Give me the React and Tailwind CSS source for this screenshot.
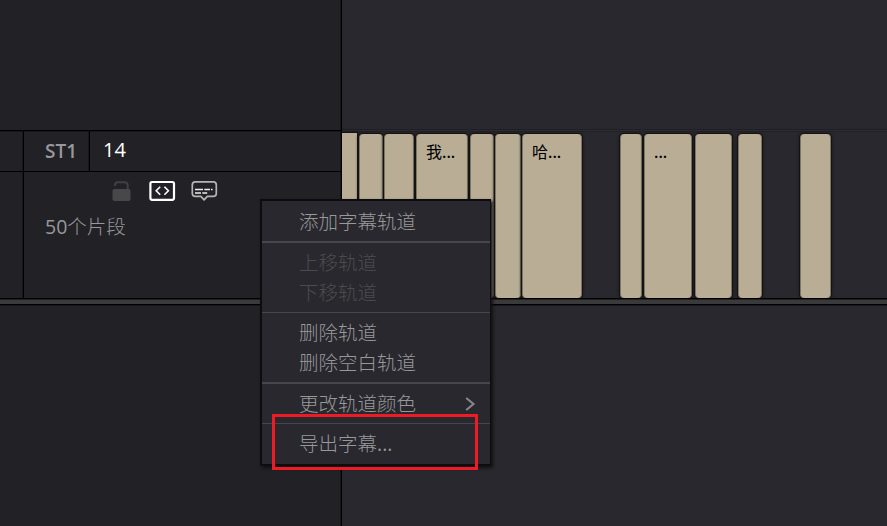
import React from "react";

const clips = [
  { id: 1, size: "-mt-px h-[165px] w-[15px]", shape: "border-x-0" },
  { id: 2, size: "ml-[2px] h-[164px] w-[24px]", shape: "rounded border-x" },
  { id: 3, size: "ml-[1px] h-[164px] w-[30px]", shape: "rounded border-x" },
  { id: 4, size: "ml-[2px] h-[164px] w-[52px]", shape: "rounded border-x", label: "我..." },
  { id: 5, size: "ml-[2px] h-[164px] w-[24px]", shape: "rounded border-x" },
  { id: 6, size: "ml-[1px] h-[164px] w-[26px]", shape: "rounded border-x" },
  { id: 7, size: "ml-[1px] h-[164px] w-[60px]", shape: "rounded border-x", label: "哈..." },
  { id: 8, size: "ml-[38px] h-[164px] w-[22px]", shape: "rounded border-x" },
  { id: 9, size: "ml-[2px] h-[164px] w-[48px]", shape: "rounded border-x", label: "..." },
  { id: 10, size: "ml-[3px] h-[164px] w-[37px]", shape: "rounded border-x" },
  { id: 11, size: "ml-[6px] h-[164px] w-[24px]", shape: "rounded border-x" },
  { id: 12, size: "ml-[38px] h-[164px] w-[31px]", shape: "rounded border-x" },
];

function Clip({ clip }) {
  return (
    <div
      className={`shrink-0 border-[#7d7562] bg-[#b9ae95] shadow-[0_0_0_1px_#131315,0_0_3px_1px_#17171a] ${clip.size} ${clip.shape}`}
    >
      {clip.label && (
        <span className="block pt-[7px] pl-[9px] text-[16px] leading-[22px] whitespace-nowrap text-black">
          {clip.label.replace("...", "")}
          <span className="font-semibold">...</span>
        </span>
      )}
    </div>
  );
}

function LockIcon() {
  return (
    <svg width="20" height="22" viewBox="0 0 20 22">
      <rect x="0.5" y="9" width="18" height="12" rx="2" fill="#48484a" />
      <path d="M3 6V4.8Q3 2.2 6 2.2H12.2Q15.7 2.2 15.7 5.2V9" fill="none" stroke="#414144" strokeWidth="2" />
    </svg>
  );
}

function CodeIcon() {
  return (
    <svg width="28" height="22" viewBox="0 0 28 22" fill="none" stroke="#fff">
      <rect x="2.4" y="2" width="23.6" height="17.8" rx="1.7" strokeWidth="2.2" />
      <path d="M12.2 6.8L8.2 10.8L12.2 14.8M16.4 6.8L20.4 10.8L16.4 14.8" strokeWidth="1.6" />
    </svg>
  );
}

function CaptionIcon() {
  return (
    <svg width="28" height="22" viewBox="0 0 28 22" fill="none">
      <path d="M5.3 1.9H23.3Q26.3 1.9 26.3 5V13.5Q26.3 16.4 23.3 16.4H17.3L14.1 19.8L10.8 16.4H5.3Q2.3 16.4 2.3 13.5V5Q2.3 1.9 5.3 1.9Z" stroke="#b4b4b5" strokeWidth="1.7" strokeLinejoin="round" />
      <path d="M5 9.5H13M14.3 9.5H20M21 9.5H22.6M5 13H11M12.3 13H17.2" stroke="#eee" strokeWidth="1.3" />
    </svg>
  );
}

function Item({ children, dim }) {
  return (
    <div
      className={`flex h-[30px] items-center pl-[37px] text-[19.5px] font-light whitespace-nowrap ${dim ? "text-[#4b4b4f]" : "text-[#98989a]"}`}
    >
      {children}
    </div>
  );
}

function ContextMenu() {
  return (
    <div className="absolute top-[199px] left-[260px] h-[267px] w-[231px] border-2 border-r border-[#0d0d0f] bg-[#29282e] shadow-[2px_2px_3px_#111113]">
      <div className="pt-[6px] pb-[4px]"><Item>添加字幕轨道</Item></div>
      <div className="h-[2px] bg-[#46474c]" />
      <div className="pt-[5px] pb-[4px]">
        <Item dim>上移轨道</Item>
        <Item dim>下移轨道</Item>
      </div>
      <div className="h-px bg-[#46474c]" />
      <div className="pt-[5px] pb-[4px]">
        <Item>删除轨道</Item>
        <Item>删除空白轨道</Item>
      </div>
      <div className="h-[2px] bg-[#46474c]" />
      <div className="flex items-center justify-between pt-[5px] pr-[14px] pb-[4px]">
        <Item>更改轨道颜色</Item>
        <svg width="11" height="16" viewBox="0 0 11 16" fill="none" stroke="#858588" strokeWidth="2.2">
          <path d="M1.2 2L8.5 8L1.2 14" />
        </svg>
      </div>
      <div className="h-px bg-[#46474c]" />
      <div className="pt-[5px]"><Item>导出字幕<span className="font-normal">...</span></Item></div>
    </div>
  );
}

export default function App() {
  return (
    <div className="relative flex h-[526px] w-[887px] flex-col overflow-hidden bg-[#29282e] font-['Open_Sans','Noto_Sans_CJK_SC',sans-serif]">
      <div className="flex h-[298px]">
        <div className="flex w-[342px] shrink-0 flex-col border-r border-black bg-[#222126] shadow-[inset_-1px_0_#17161a]">
          <div className="h-[130px]" />
          <div className="flex h-[42px] border-y border-black shadow-[inset_0_1px_#18171b]">
            <div className="w-[24px] border-r border-black shadow-[inset_-1px_0_#18171b]" />
            <div className="flex w-[66px] items-center border-r border-black pl-[21px] text-[19px] font-semibold text-[#98989a] shadow-[inset_-1px_0_#18171b]">ST1</div>
            <div className="flex items-center pb-[2px] pl-[13px] text-[20px] font-medium text-white">14</div>
          </div>
          <div className="flex flex-1">
            <div className="w-[24px] border-r border-black shadow-[inset_-1px_0_#18171b]" />
            <div className="flex-1">
              <div className="flex pt-[8px] pl-[88px]">
                <LockIcon />
                <div className="ml-[16px]"><CodeIcon /></div>
                <div className="ml-[14px]"><CaptionIcon /></div>
              </div>
              <div className="pt-[11px] pl-[21px] text-[19.5px] leading-[28px] font-light text-[#98989a]"><span className="font-normal">50</span>个片段</div>
            </div>
          </div>
        </div>
        <div className="flex flex-1 flex-col overflow-hidden">
          <div className="h-[129px]" />
          <div className="h-px bg-[#1f1e23]" />
          <div className="h-px bg-[#2e2d33]" />
          <div className="h-px bg-[#212025]" />
          <div className="flex pt-[2px]">
            {clips.map((clip) => <Clip key={clip.id} clip={clip} />)}
          </div>
        </div>
      </div>
      <div className="z-10 h-[7px] border-y border-black bg-[#3a3a3a] shadow-[inset_0_1px_#202022,0_1px_#17171a]" />
      <div className="flex flex-1">
        <div className="w-[342px] border-r border-black bg-[#222126] shadow-[inset_-1px_0_#17161a]" />
      </div>
      <div className="absolute inset-0 z-20">
        <ContextMenu />
        <div className="absolute top-[414px] left-[272px] h-[56px] w-[206px] border-3 border-[#ed1c24]" />
      </div>
    </div>
  );
}
